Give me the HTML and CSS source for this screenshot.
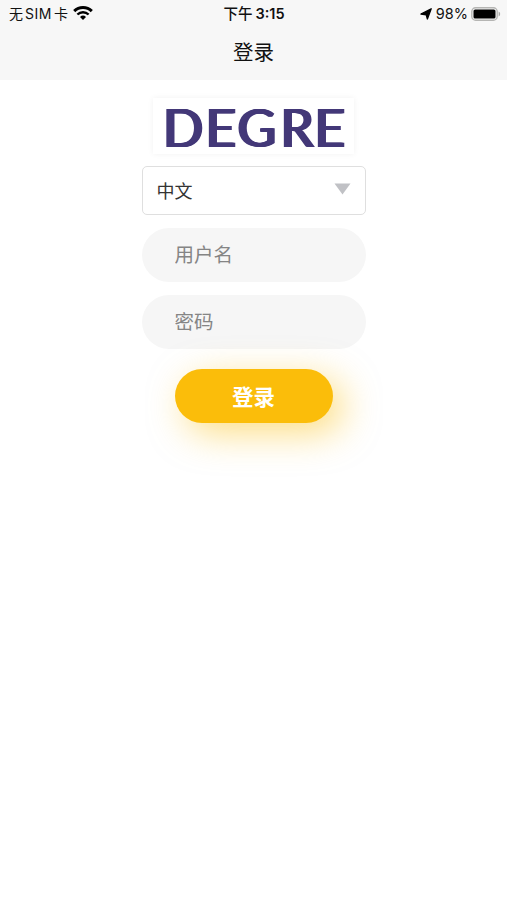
FILE: index.html
```
<!DOCTYPE html>
<html lang="zh-CN">
<head>
    <meta charset="UTF-8">
    <meta name="viewport" content="width=device-width, initial-scale=1.0">
    <title>登录</title>
    <link rel="stylesheet" href="styles.css">
</head>
<body>
    <header class="header">
        <div class="status-bar">
            <div class="status-left">
                <span class="carrier"><span>无</span><span class="sim">SIM</span><span>卡</span></span>
                <svg class="wifi" width="20" height="14" viewBox="0 0 20 14">
                    <path d="M1.2 5.1a12.6 12.6 0 0 1 17.6 0" fill="none" stroke="#000" stroke-width="3"/>
                    <path d="M4.4 8.5a8 8 0 0 1 11.2 0" fill="none" stroke="#000" stroke-width="2.4"/>
                    <path d="M7 11a4.3 4.3 0 0 1 6 0l-3 3z" fill="#000"/>
                </svg>
            </div>
            <div class="time"><span class="noon">下午</span><span>3:15</span></div>
            <div class="status-right">
                <svg width="12" height="12" viewBox="0 0 12 12">
                    <path d="M11.2.8 7.4 11 6.2 6.9.9 6z" fill="#000" stroke="#000" stroke-width="1.3" stroke-linejoin="round"/>
                </svg>
                <span class="percent">98%</span>
                <svg class="battery" width="30" height="14" viewBox="0 0 30 14">
                    <rect x=".8" y=".8" width="25.4" height="12.4" rx="3.8" fill="#f7f7f7" stroke="#b5b5b3" stroke-width="1.4"/>
                    <rect x="2.5" y="2.4" width="22" height="9.2" rx="1.6" fill="#000"/>
                    <path d="M27.6 4.6a2.6 2.6 0 0 1 0 4.8z" fill="#a9a9a7"/>
                </svg>
            </div>
        </div>
        <h1 class="title">登录</h1>
    </header>

    <form class="login-form">
        <div class="logo">
            <span>D</span><span>E</span><span>G</span><span>R</span><span>E</span>
        </div>

        <div class="language">
            <span>中文</span>
            <svg width="17" height="12" viewBox="0 0 17 12">
                <path d="M.5.5h16l-8 11z" fill="#c0c1c5"/>
            </svg>
        </div>

        <input class="field" type="text" placeholder="用户名">
        <input class="field" type="password" placeholder="密码">

        <button class="submit" type="button">登录</button>
    </form>
</body>
</html>
```

FILE: styles.css
```
body {
    margin: 0;
    min-height: 100vh;
    background: #fff;
    color: #111;
    font-family: Inter, "Noto Sans CJK SC", sans-serif;
}
.header {
    height: 80px;
    background: #f7f7f7;
}
.status-bar {
    display: grid;
    grid-template-columns: 1fr auto 1fr;
    align-items: center;
    height: 27px;
    padding: 0 6px 0 9px;
    font-size: 14px;
    line-height: 27px;
}
.status-left, .status-right {
    display: flex;
    align-items: center;
}
.carrier {
    display: flex;
    gap: 2px;
}
.sim {
    letter-spacing: 0.5px;
}
.wifi {
    margin: 0 0 2px 5px;
}
.time {
    display: flex;
    gap: 3px;
    margin-right: 2px;
    font-size: 14.5px;
    font-weight: 600;
}
.noon {
    font-weight: 500;
}
.status-right {
    justify-content: flex-end;
}
.percent {
    margin: 0 3px 0 4px;
    font-size: 14.5px;
}
.title {
    margin: 0;
    font-size: 20.5px;
    font-weight: 400;
    line-height: 52px;
    text-align: center;
}
.login-form {
    display: flex;
    flex-direction: column;
    align-items: center;
    width: 224px;
    margin: 0 auto;
    padding: 18px 0 60px;
}
.logo {
    display: grid;
    grid-template-columns: 42.5px 32px 43px 34px 32px;
    box-sizing: border-box;
    width: 201px;
    height: 56px;
    padding-left: 8.5px;
    box-shadow: 0 0 6px #f1f1f1;
    color: #433878;
    font-family: Lato, sans-serif;
    font-size: 53px;
    font-weight: 400;
    line-height: 57px;
    /* thickens the vertical strokes only */
    text-shadow: 1px 0 #433878, 2px 0 #433878, 3px 0 #433878;
}
.language {
    display: flex;
    align-items: center;
    justify-content: space-between;
    box-sizing: border-box;
    width: 224px;
    height: 49px;
    margin: 12px 0 13px;
    padding: 0 14px;
    border: 1px solid #dfdfdf;
    border-radius: 5px;
    color: #333;
    font-size: 18px;
}
.language span {
    margin-bottom: 2px;
}
.language svg {
    margin-bottom: 3px;
}
.field {
    box-sizing: border-box;
    width: 224px;
    height: 54px;
    margin: 0 0 13px;
    padding: 0 33px;
    border: none;
    border-radius: 27px;
    background: #f6f6f6;
    font-family: inherit;
    font-size: 19.5px;
}
.field::placeholder {
    color: #858585;
}
.submit {
    width: 158px;
    height: 54px;
    margin-top: 7px;
    padding: 0 0 2px;
    border: none;
    border-radius: 27px;
    background: #fbbd0a;
    box-shadow: 10px 10px 36px rgba(251, 189, 10, 0.5);
    color: #fff;
    font-family: inherit;
    font-size: 21.5px;
    font-weight: 600;
}
```
